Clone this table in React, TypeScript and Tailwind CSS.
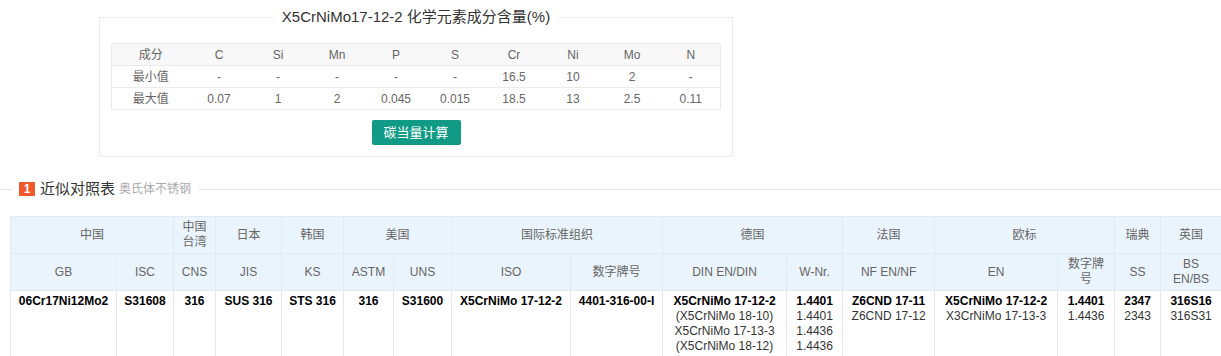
import React from "react";

const ELEMENTS = ["C", "Si", "Mn", "P", "S", "Cr", "Ni", "Mo", "N"];
const MIN_VALUES = ["-", "-", "-", "-", "-", "16.5", "10", "2", "-"];
const MAX_VALUES = ["0.07", "1", "2", "0.045", "0.015", "18.5", "13", "2.5", "0.11"];

const COL_WIDTHS = [106, 57, 42, 66, 62, 50, 58, 119, 92, 124, 56, 92, 123, 57, 46, 61];

const GROUPS: { label: string; span: number }[] = [
  { label: "中国", span: 2 },
  { label: "中国台湾", span: 1 },
  { label: "日本", span: 1 },
  { label: "韩国", span: 1 },
  { label: "美国", span: 2 },
  { label: "国际标准组织", span: 2 },
  { label: "德国", span: 2 },
  { label: "法国", span: 1 },
  { label: "欧标", span: 2 },
  { label: "瑞典", span: 1 },
  { label: "英国", span: 1 },
];

const STANDARDS = [
  "GB",
  "ISC",
  "CNS",
  "JIS",
  "KS",
  "ASTM",
  "UNS",
  "ISO",
  "数字牌号",
  "DIN EN/DIN",
  "W-Nr.",
  "NF EN/NF",
  "EN",
  "数字牌号",
  "SS",
  "BS EN/BS",
];

// first entry is the main grade (bold), the rest are alternates
const GRADES: string[][] = [
  ["06Cr17Ni12Mo2"],
  ["S31608"],
  ["316"],
  ["SUS 316"],
  ["STS 316"],
  ["316"],
  ["S31600"],
  ["X5CrNiMo 17-12-2"],
  ["4401-316-00-I"],
  ["X5CrNiMo 17-12-2", "(X5CrNiMo 18-10)", "X5CrNiMo 17-13-3", "(X5CrNiMo 18-12)"],
  ["1.4401", "1.4401", "1.4436", "1.4436"],
  ["Z6CND 17-11", "Z6CND 17-12"],
  ["X5CrNiMo 17-12-2", "X3CrNiMo 17-13-3"],
  ["1.4401", "1.4436"],
  ["2347", "2343"],
  ["316S16", "316S31"],
];

const Composition = () => {
  return (
    <div className="pt-[7px] pl-[99px]">
      <fieldset className="w-[634px] border border-[#ebebeb] px-[11px] pb-[11px]">
        <legend className="mx-auto px-[8px] text-[15px] leading-[20px] text-[#333]">
          X5CrNiMo17-12-2 化学元素成分含量(%)
        </legend>
        <table className="mt-[16px] w-[610px] table-fixed border-collapse border border-[#ebebeb] text-[12px] text-[#666]">
          <colgroup>
            <col className="w-[78px]" />
            {ELEMENTS.map((el) => (
              <col key={el} />
            ))}
          </colgroup>
          <tbody>
            <tr className="h-[22px] bg-[#f8f8f8]">
              <td className="text-center">成分</td>
              {ELEMENTS.map((el) => (
                <td key={el} className="text-center">
                  {el}
                </td>
              ))}
            </tr>
            <tr className="h-[22px] border-t border-[#ebebeb]">
              <td className="text-center">最小值</td>
              {MIN_VALUES.map((v, i) => (
                <td key={i} className="text-center">
                  {v}
                </td>
              ))}
            </tr>
            <tr className="h-[22px] border-t border-[#ebebeb]">
              <td className="text-center">最大值</td>
              {MAX_VALUES.map((v, i) => (
                <td key={i} className="text-center">
                  {v}
                </td>
              ))}
            </tr>
          </tbody>
        </table>
        <div className="mt-[10px] flex justify-center">
          <button className="h-[25px] w-[89px] rounded-[2px] bg-[#119a85] text-[13px] text-white">
            碳当量计算
          </button>
        </div>
      </fieldset>
    </div>
  );
};

const SectionTitle = () => {
  return (
    <div className="mt-[22px] flex h-[20px] items-center">
      <span className="h-px w-[13px] bg-[#e6e6e6]" />
      <span className="ml-[6px] flex h-[14px] w-[16px] items-center justify-center bg-[#f1582a] text-[12px] font-bold leading-none text-white">
        1
      </span>
      <span className="ml-[5px] text-[15px] text-[#333]">近似对照表</span>
      <span className="ml-[4px] text-[12px] text-[#aaa]">奥氏体不锈钢</span>
      <span className="ml-[8px] h-px flex-1 bg-[#e6e6e6]" />
    </div>
  );
};

const CompareTable = () => {
  return (
    <div className="mt-[17px] pl-[10px]">
      <table className="w-[1211px] table-fixed border-collapse text-[12px] leading-[15px]">
        <colgroup>
          {COL_WIDTHS.map((w, i) => (
            <col key={i} style={{ width: w }} />
          ))}
        </colgroup>
        <thead className="bg-[#eaf4fc] font-normal text-[#666]">
          <tr>
            {GROUPS.map((g) => (
              <th
                key={g.label}
                colSpan={g.span}
                className="h-[37px] border border-[#dfebf6] px-[6px] font-normal"
              >
                {g.label}
              </th>
            ))}
          </tr>
          <tr>
            {STANDARDS.map((s, i) => (
              <th
                key={i}
                className="h-[37px] border border-[#dfebf6] px-[6px] font-normal"
              >
                {s}
              </th>
            ))}
          </tr>
        </thead>
        <tbody>
          <tr>
            {GRADES.map((lines, i) => (
              <td
                key={i}
                className="h-[80px] border border-[#e8e8e8] px-[6px] pt-[3px] text-center align-top text-[#333]"
              >
                {lines.map((line, j) => (
                  <div key={j} className={j === 0 ? "font-bold text-black" : ""}>
                    {line}
                  </div>
                ))}
              </td>
            ))}
          </tr>
        </tbody>
      </table>
    </div>
  );
};

export default function App() {
  return (
    <div
      className="h-[356px] w-[1221px] overflow-hidden bg-white"
      style={{ fontFamily: '"Liberation Sans", "Noto Sans CJK SC", sans-serif' }}
    >
      <Composition />
      <SectionTitle />
      <CompareTable />
    </div>
  );
}
